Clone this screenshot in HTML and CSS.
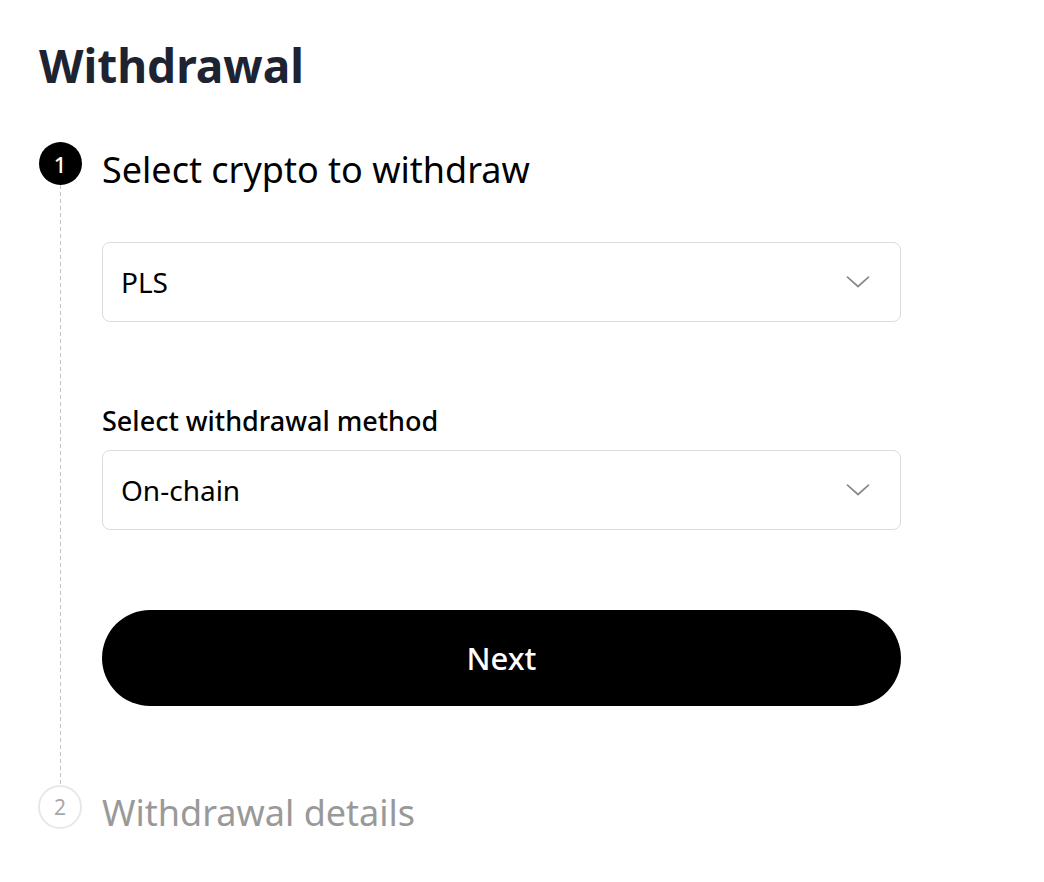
FILE: index.html
```html
<!DOCTYPE html>
<html lang="en">
<head>
<meta charset="utf-8">
<title>Withdrawal</title>
<link rel="stylesheet" href="styles.css">
</head>
<body>
<main class="page">
  <h1 class="page-title">Withdrawal</h1>
  <ol class="steps">
    <li class="step step-active">
      <div class="marker">
        <span class="marker-dot">1</span>
        <span class="marker-line"></span>
      </div>
      <div class="step-body">
        <h2 class="step-title">Select crypto to withdraw</h2>
        <div class="step-content">
          <button class="select" type="button">
            <span class="select-value">PLS</span>
            <svg class="chevron" viewBox="0 0 24 12" width="24" height="12" aria-hidden="true"><path d="M1.5 1.2 L12 10.5 L22.5 1.2" fill="none" stroke="#8a8a8a" stroke-width="1.7" stroke-linecap="round" stroke-linejoin="round"/></svg>
          </button>
          <label class="field-label">Select withdrawal method</label>
          <button class="select" type="button">
            <span class="select-value">On-chain</span>
            <svg class="chevron" viewBox="0 0 24 12" width="24" height="12" aria-hidden="true"><path d="M1.5 1.2 L12 10.5 L22.5 1.2" fill="none" stroke="#8a8a8a" stroke-width="1.7" stroke-linecap="round" stroke-linejoin="round"/></svg>
          </button>
          <button class="next-btn" type="button">Next</button>
        </div>
      </div>
    </li>
    <li class="step step-pending">
      <div class="marker">
        <span class="marker-dot">2</span>
      </div>
      <div class="step-body">
        <h2 class="step-title">Withdrawal details</h2>
      </div>
    </li>
  </ol>
</main>
</body>
</html>
```

FILE: styles.css
```css
* { box-sizing: border-box; }

html, body {
  margin: 0;
  padding: 0;
  background: #ffffff;
}

body {
  font-family: "Noto Sans", "Open Sans", Arial, sans-serif;
  color: #000000;
}

.page {
  padding: 36px 0 0 39px;
  width: 901px;
}

.page-title {
  margin: 0;
  font-size: 46px;
  line-height: 58px;
  font-weight: 700;
  color: #1e2331;
}

.steps {
  list-style: none;
  margin: 48px 0 0;
  padding: 0;
}

.step {
  display: grid;
  grid-template-columns: 42px 1fr;
  column-gap: 21px;
}

.marker {
  display: flex;
  flex-direction: column;
  align-items: center;
}

.marker-dot {
  width: 43px;
  height: 43px;
  border-radius: 50%;
  display: flex;
  align-items: center;
  justify-content: center;
  font-size: 22px;
  font-weight: 500;
  flex: none;
}

.step-active .marker-dot {
  background: #000;
  color: #fff;
}

.step-pending .marker-dot {
  width: 44px;
  height: 44px;
  background: #fff;
  color: #a8a8a8;
  border: 2px solid #e8e8e8;
  font-size: 21px;
  font-weight: 400;
}

.marker-line {
  flex: 1;
  width: 1px;
  background: repeating-linear-gradient(to bottom, #c4c4c4 0 4px, transparent 4px 7px);
}

.step-title {
  margin: 0;
  padding-top: 6px;
  font-size: 36px;
  line-height: 43px;
  font-weight: 400;
}

.step-active .step-title { color: #000; }
.step-pending .step-title { color: #999999; }

.step-content {
  padding: 51px 0 79px;
  display: flex;
  flex-direction: column;
}

.select {
  display: flex;
  align-items: center;
  justify-content: space-between;
  height: 80px;
  width: 100%;
  padding: 0 30px 0 18px;
  border: 1.5px solid #dcdcdc;
  border-radius: 8px;
  background: #fff;
  font-family: inherit;
  font-size: 28px;
  color: #000;
  text-align: left;
}

.field-label {
  margin: 83px 0 13px;
  font-size: 27px;
  line-height: 32px;
  font-weight: 500;
}

.next-btn {
  margin-top: 80px;
  height: 96px;
  width: 100%;
  border: none;
  border-radius: 48px;
  background: #000;
  color: #fff;
  font-family: inherit;
  font-size: 31px;
  font-weight: 500;
}
```
